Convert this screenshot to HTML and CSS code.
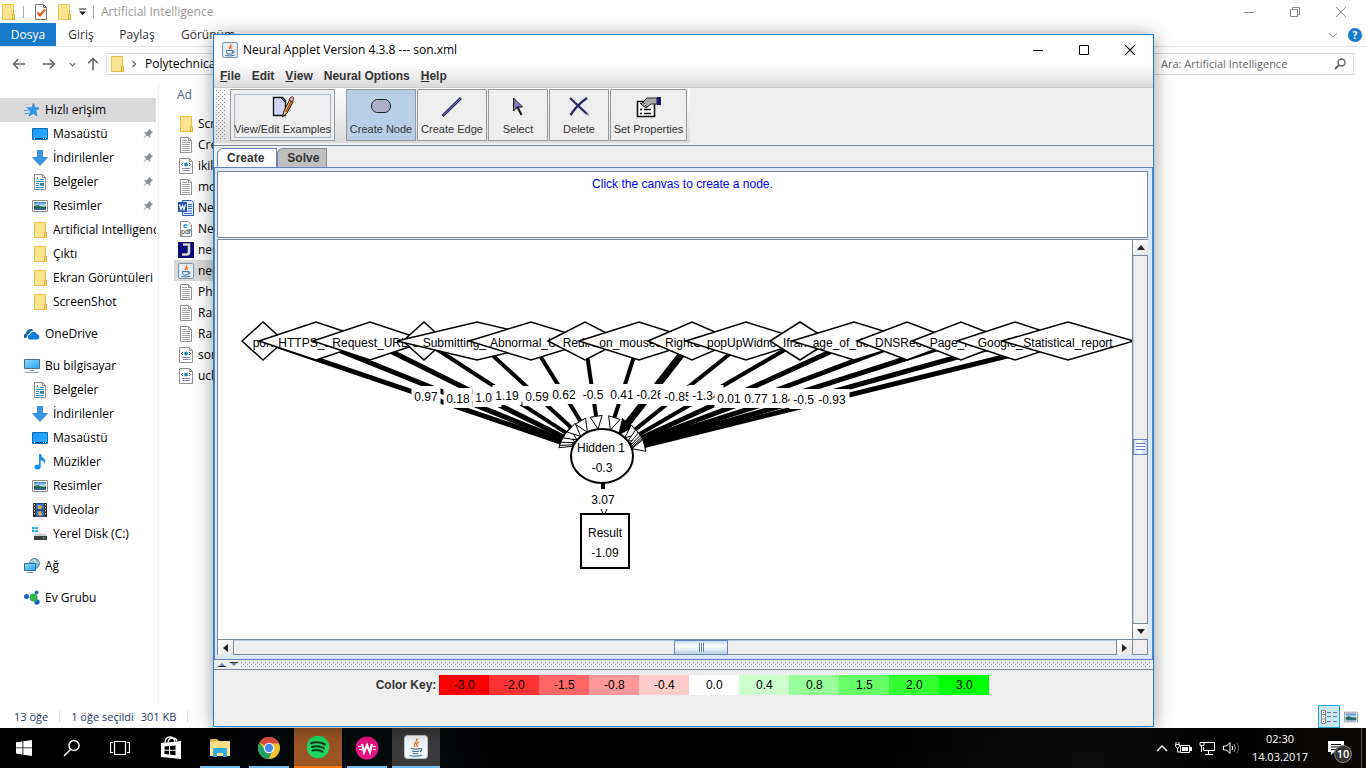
FILE: index.html
```html
<!DOCTYPE html>
<html lang="tr">
<head>
<meta charset="utf-8">
<title>Neural Applet Version 4.3.8 --- son.xml</title>
<link rel="stylesheet" href="styles.css">
</head>
<body>
<svg class="defs" aria-hidden="true">
  <defs>
    <linearGradient id="g-desk" x1="0" y1="0" x2="1" y2="1"><stop offset="0" stop-color="#1e90ee"/><stop offset="1" stop-color="#25b4ff"/></linearGradient>
    <linearGradient id="g-pc" x1="0" y1="0" x2="1" y2="1"><stop offset="0" stop-color="#8bdcff"/><stop offset="1" stop-color="#2aa5f0"/></linearGradient>
    <linearGradient id="g-photo" x1="0" y1="0" x2="0" y2="1"><stop offset="0" stop-color="#3f7fd0"/><stop offset=".5" stop-color="#d5ecf5"/><stop offset=".6" stop-color="#3e7d72"/><stop offset="1" stop-color="#2b5fa6"/></linearGradient>
    <symbol id="i-folder" viewBox="0 0 16 16"><path d="M2.5.5h11v10h1v5h-12z" fill="#ffe38f" stroke="#e8c04a"/><path d="M12.500 15v-4.500h2v5h-2z" fill="#ffd75e" stroke="#e0b23a"/></symbol>
    <symbol id="i-star" viewBox="0 0 16 16"><path d="M9.500 1.500l1.300 4.300 4.200.2-3.300 2.800 1.300 5-3.800-2.600-4 2.800 1.500-4.800-2.900-3 4-.4z" fill="#2f9be8" stroke="#1673bd" stroke-width=".7"/><path d="M0 8.500h5M1 11.500h4M2 5.500h4" stroke="#4aa9ec"/></symbol>
    <symbol id="i-desk" viewBox="0 0 16 16"><path d="M.5 2.500h15v11H.5z" fill="url(#g-desk)" stroke="#0c6cbd"/><path d="M1 12.500h14" stroke="#0a4d8c"/><path d="M2 12.500h1m8 0h1m1 0h1" stroke="#fff"/></symbol>
    <symbol id="i-down" viewBox="0 0 16 16"><path d="M5.500.5h5v7h5L8 15.500.5 7.500h5z" fill="#3b97e6" stroke="#2a7cc9" stroke-width=".8"/></symbol>
    <symbol id="i-doc" viewBox="0 0 16 16"><path d="M2.500.5h8l3 3v12h-11z" fill="#fff" stroke="#8a8a8a"/><path d="M10.500.5v3h3" fill="none" stroke="#8a8a8a"/><path d="M4.500 5.500l1-2 1 2M8 5.500h4M4 7.500h8M4 9.500h3M4 11.500h3M4 13.500h8" fill="none" stroke="#2b8acb"/><path d="M8 9h4v3H8z" fill="#3f8e84"/></symbol>
    <symbol id="i-pic" viewBox="0 0 16 16"><path d="M.5 2.500h15v11H.5z" fill="#fff" stroke="#8f8f8f"/><path d="M2 4h12v8H2z" fill="url(#g-photo)"/><path d="M2 8l4-1 4 2h4v1.500H2z" fill="#2d6a5e"/></symbol>
    <symbol id="i-text" viewBox="0 0 16 16"><path d="M2.500.5h8l3 3v12h-11z" fill="#fff" stroke="#919191"/><path d="M10.500.5v3h3" fill="none" stroke="#919191"/><path d="M4 3.500h5M4 5.500h8M4 7.500h8M4 9.500h8M4 11.500h8M4 13.500h8" stroke="#a5a5a5"/></symbol>
    <symbol id="i-xml" viewBox="0 0 16 16"><path d="M1.500.5h10l3 3v12h-13z" fill="#fff" stroke="#919191"/><path d="M11.500.5v3h3" fill="none" stroke="#919191"/><circle cx="8" cy="6.500" r="2" fill="#2c86a8"/><path d="M5 5L3.500 6.500 5 8m6-3l1.500 1.500L11 8" fill="none" stroke="#335a77"/><path d="M4 10.500h8M5 12.500h7" stroke="#8d90ae"/></symbol>
    <symbol id="i-word" viewBox="0 0 16 16"><path d="M4.500.5h9l2 2v13h-11z" fill="#dbe8f8" stroke="#2a5fb0"/><path d="M10 4.500h4M10 6.500h4M10 8.500h4M6 13.500h8M10 11h4" stroke="#3c74c4"/><path d="M0 2h9v10H0z" fill="#2153a8"/><path d="M1.500 4.500L3 9.500l1.500-4 1.500 4 1.500-5" fill="none" stroke="#fff" stroke-width="1.200"/></symbol>
    <symbol id="i-pdf" viewBox="0 0 16 16"><path d="M2.500.5h8l3 3v12h-11z" fill="#fff" stroke="#919191"/><text x="5" y="7" class="glyph-e">e</text><text x="3" y="13" class="glyph-pdf">pdf</text></symbol>
    <symbol id="i-j" viewBox="0 0 16 16"><path d="M0 0h16v16H0z" fill="#0a0a7a"/><path d="M5 2.500h6v7.500q0 2.500-2.500 2.500H4" fill="none" stroke="#d8d8c8" stroke-width="2.600"/></symbol>
    <symbol id="i-java" viewBox="0 0 16 16"><rect x=".5" y=".5" width="15" height="15" rx="1.500" fill="#e6eef5" stroke="#7e93a6"/><path d="M8.500 2c2 2-3 2.800-.8 5.300M10 4.200c-1.800 1-1.500 1.600-.5 2.800" fill="none" stroke="#e8731c" stroke-width="1.200"/><path d="M4.500 8.500h6q0 3-1 3.500h-4q-1-.6-1-3.500zm6 .5q2.500-.3 1.500 1.500l-2 .7M3.500 13.500q4.500 1 9-.3" fill="none" stroke="#4a7899"/></symbol>
    <symbol id="i-java-big" viewBox="0 0 24 24"><rect x=".5" y=".5" width="23" height="23" rx="3" fill="#f4f6f8" stroke="#b9c4ce"/><path d="M12.500 3.500c2.500 3-4.500 4.300-1.500 8.500M15 7c-3 1.500-3 2.500-1.300 5" fill="none" stroke="#e8731c" stroke-width="1.300"/><path d="M7 13.500q4.500 1 9 0M8 16q4 1 7 0M8.500 18.300q3 .8 6 0M5.500 20.500q6.500 1.500 12.500-.5M16.500 13.500q3 .5-.5 3.500" fill="none" stroke="#4a7899" stroke-width="1.100"/></symbol>
    <symbol id="i-cloud" viewBox="0 0 16 16"><path d="M1.500 12.500a2.600 2.600 0 0 1 .5-5A4.500 4.500 0 0 1 9.500 4.200q-3.500.5-4.300 3.600-2.200.5-2.200 3z" fill="#0b63b5"/><path d="M5.500 13.500a2.600 2.600 0 0 1 .3-5 3.700 3.700 0 0 1 7-.6 2.900 2.900 0 0 1 .7 5.600z" fill="#0f7cdb"/></symbol>
    <symbol id="i-pc" viewBox="0 0 16 16"><path d="M.5 1.500h15v9H.5z" fill="url(#g-pc)" stroke="#4a7187"/><path d="M6 12.500h4M1 14.500h14" stroke="#87a0b0"/></symbol>
    <symbol id="i-note" viewBox="0 0 16 16"><ellipse cx="5.500" cy="13" rx="3" ry="2.500" fill="#1590ea"/><path d="M7 0h2q.5 3 3.500 5 1.500 2-.5 5 .5-3-3.300-4v7H7z" fill="#1590ea"/></symbol>
    <symbol id="i-video" viewBox="0 0 16 16"><path d="M1 1h14v14H1z" fill="#2c2c2c"/><path d="M4 1.500h8v6H4zM4 8.500h8v6H4z" fill="#3b6fd1"/><path d="M6 3l4 1-1 3H6zM6 10l3-1 1 4-3 1z" fill="#e0b32c"/><path d="M2.500 2v12M13.500 2v12" stroke="#eee" stroke-dasharray="1.500 1.500"/></symbol>
    <symbol id="i-disk" viewBox="0 0 16 16"><path d="M0 1h2.500v2.300H0zm3.300 0h2.500v2.300H3.300zM0 4h2.500v2.300H0zm3.300 0h2.500v2.300H3.300z" fill="#1aa7ee"/><path d="M4 7.500h9l2 3H2z" fill="#c9cdd0"/><path d="M2 10h13v4H2z" fill="#3a3d40"/><path d="M11 12h2" stroke="#4de04d"/></symbol>
    <symbol id="i-net" viewBox="0 0 16 16"><circle cx="10.500" cy="5.500" r="5" fill="#86b6d4" stroke="#4d86a8"/><path d="M6 4q5-3 8 1M10 1q3 5 0 9" fill="none" stroke="#d4ecf7"/><path d="M.5 5.500h11v7H.5z" fill="url(#g-pc)" stroke="#2d6f96"/><path d="M3 14.500h6" stroke="#7d95a5"/></symbol>
    <symbol id="i-home" viewBox="0 0 16 16"><circle cx="2.500" cy="6.500" r="2.500" fill="#1769b5"/><circle cx="12.500" cy="2.500" r="2" fill="#1769b5"/><circle cx="13" cy="12" r="2.700" fill="#1769b5"/><circle cx="9.500" cy="7.500" r="4" fill="#36b34a"/></symbol>
    <symbol id="i-pin" viewBox="0 0 12 12"><path d="M7 1l4 3.500-1.500.5-1.500 2.500.3 2.500L5 7.500 1 11l3-4.500L2 4l2.500.3 2-1.800z" fill="#87919a"/></symbol>
    <symbol id="i-arrow" viewBox="0 0 16 16"><path d="M15 8H2m5-5.500L1.800 8 7 13.500" fill="none" stroke="currentColor" stroke-width="1.800"/></symbol>
    <symbol id="i-chev" viewBox="0 0 8 8"><path d="M2.500 1l3 3-3 3" fill="none" stroke="currentColor" stroke-width="1.400"/></symbol>
  </defs>
</svg>

<div class="desktop">
  <section class="explorer" aria-label="Artificial Intelligence">
    <header class="ex-title">
      <svg class="ic"><use href="#i-folder"/></svg>
      <span class="bar"></span>
      <button class="plain check" aria-label="Özellikler"><svg class="ic" viewBox="0 0 16 16"><path d="M2.500.5h8l3 3v12h-11z" fill="#fff" stroke="#777"/><path d="M10.500.5v3h3" fill="none" stroke="#777"/><path d="M4.500 8.500l2.500 3 5-6" fill="none" stroke="#e8511b" stroke-width="2"/></svg></button>
      <button class="plain" aria-label="Yeni klasör"><svg class="ic"><use href="#i-folder"/></svg></button>
      <button class="plain more" aria-label="Özelleştir"><svg width="7" height="8" viewBox="0 0 7 8"><path d="M0 1h7" stroke="#222"/><path d="M0 3.500h7L3.500 7z" fill="#222"/></svg></button>
      <span class="bar"></span>
      <h1 class="ex-name">Artificial Intelligence</h1>
      <div class="win-buttons">
        <button class="plain" aria-label="Simge durumuna küçült"><svg width="10" height="10"><path d="M0 5.500h10" stroke="#888"/></svg></button>
        <button class="plain" aria-label="Önceki boyut"><svg width="10" height="10"><path d="M.5 2.500h7v7h-7zM2.500 2V.5h7v7H8" fill="none" stroke="#888"/></svg></button>
        <button class="plain" aria-label="Kapat"><svg width="10" height="10"><path d="M0 0l10 10M10 0L0 10" stroke="#888"/></svg></button>
      </div>
    </header>
    <nav class="ribbon">
      <button class="rtab file">Dosya</button>
      <button class="rtab giris">Giriş</button>
      <button class="rtab paylas">Paylaş</button>
      <button class="rtab gorunum">Görünüm</button>
      <span class="ribbon-end"><svg width="10" height="6"><path d="M1 1l4 4 4-4" fill="none" stroke="#999"/></svg><button class="help">?</button></span>
    </nav>
    <div class="address-row">
      <button class="plain" aria-label="Geri"><svg width="14" height="14"><use href="#i-arrow"/></svg></button>
      <button class="plain fwd" aria-label="İleri"><svg width="14" height="14"><use href="#i-arrow"/></svg></button>
      <button class="plain recent" aria-label="Son konumlar"><svg width="7" height="7"><use href="#i-chev"/></svg></button>
      <button class="plain up" aria-label="Yukarı"><svg width="14" height="14"><use href="#i-arrow"/></svg></button>
      <div class="address"><svg class="ic"><use href="#i-folder"/></svg><svg class="crumb" width="8" height="8"><use href="#i-chev"/></svg><a href="#p">Polytechnica</a></div>
      <label class="search"><input type="text" aria-label="Ara" placeholder="Ara: Artificial Intelligence"><svg width="12" height="12"><circle cx="7.500" cy="4.500" r="3.500" fill="none" stroke="#666" stroke-width="1.400"/><path d="M5 7L1 11" stroke="#666" stroke-width="2"/></svg></label>
    </div>
    <div class="ex-body">
      <nav class="sidebar">
        <ul>
          <li><a class="root current" href="#a"><svg class="ic"><use href="#i-star"/></svg>Hızlı erişim</a></li>
          <li><a href="#a"><svg class="ic"><use href="#i-desk"/></svg>Masaüstü<svg class="pin"><use href="#i-pin"/></svg></a></li>
          <li><a href="#a"><svg class="ic"><use href="#i-down"/></svg>İndirilenler<svg class="pin"><use href="#i-pin"/></svg></a></li>
          <li><a href="#a"><svg class="ic"><use href="#i-doc"/></svg>Belgeler<svg class="pin"><use href="#i-pin"/></svg></a></li>
          <li><a href="#a"><svg class="ic"><use href="#i-pic"/></svg>Resimler<svg class="pin"><use href="#i-pin"/></svg></a></li>
          <li><a href="#a"><svg class="ic"><use href="#i-folder"/></svg>Artificial Intelligence</a></li>
          <li><a href="#a"><svg class="ic"><use href="#i-folder"/></svg>Çıktı</a></li>
          <li><a href="#a"><svg class="ic"><use href="#i-folder"/></svg>Ekran Görüntüleri</a></li>
          <li><a href="#a"><svg class="ic"><use href="#i-folder"/></svg>ScreenShot</a></li>
        </ul>
        <ul><li><a class="root" href="#a"><svg class="ic"><use href="#i-cloud"/></svg>OneDrive</a></li></ul>
        <ul>
          <li><a class="root" href="#a"><svg class="ic"><use href="#i-pc"/></svg>Bu bilgisayar</a></li>
          <li><a href="#a"><svg class="ic"><use href="#i-doc"/></svg>Belgeler</a></li>
          <li><a href="#a"><svg class="ic"><use href="#i-down"/></svg>İndirilenler</a></li>
          <li><a href="#a"><svg class="ic"><use href="#i-desk"/></svg>Masaüstü</a></li>
          <li><a href="#a"><svg class="ic"><use href="#i-note"/></svg>Müzikler</a></li>
          <li><a href="#a"><svg class="ic"><use href="#i-pic"/></svg>Resimler</a></li>
          <li><a href="#a"><svg class="ic"><use href="#i-video"/></svg>Videolar</a></li>
          <li><a href="#a"><svg class="ic"><use href="#i-disk"/></svg>Yerel Disk (C:)</a></li>
        </ul>
        <ul><li><a class="root" href="#a"><svg class="ic"><use href="#i-net"/></svg>Ağ</a></li></ul>
        <ul><li><a class="root" href="#a"><svg class="ic"><use href="#i-home"/></svg>Ev Grubu</a></li></ul>
      </nav>
      <div class="files">
        <button class="plain col-head">Ad</button>
        <ul>
          <li><svg class="ic"><use href="#i-folder"/></svg>ScreenShot</li>
          <li><svg class="ic"><use href="#i-text"/></svg>Credits</li>
          <li><svg class="ic"><use href="#i-xml"/></svg>ikili</li>
          <li><svg class="ic"><use href="#i-text"/></svg>model</li>
          <li><svg class="ic"><use href="#i-word"/></svg>Neural</li>
          <li><svg class="ic"><use href="#i-pdf"/></svg>Neural</li>
          <li><svg class="ic"><use href="#i-j"/></svg>neural</li>
          <li class="selected"><svg class="ic"><use href="#i-java"/></svg>neural</li>
          <li><svg class="ic"><use href="#i-text"/></svg>Phishing</li>
          <li><svg class="ic"><use href="#i-text"/></svg>Random</li>
          <li><svg class="ic"><use href="#i-text"/></svg>Random</li>
          <li><svg class="ic"><use href="#i-xml"/></svg>son</li>
          <li><svg class="ic"><use href="#i-xml"/></svg>uclu</li>
        </ul>
      </div>
    </div>
    <footer class="ex-status">
      <span>13 öğe</span><i></i><span>1 öğe seçildi</span><span class="size">301 KB</span><i></i>
      <div class="views">
        <button class="plain view on" aria-label="Ayrıntılar"><svg width="16" height="14"><path d="M.5.5h4v13h-4zM.5 4.500h4M.5 9h4" fill="#fff" stroke="#888"/><path d="M2 2.500h1" stroke="#38c"/><path d="M2 6.500h1" stroke="#38c"/><path d="M2 11.500h1" stroke="#d33"/><path d="M6 2.500h4m2 0h4M6 6.500h4m2 0h4M6 11.500h4m2 0h4" stroke="#777"/></svg></button>
        <button class="plain view" aria-label="Büyük simgeler"><svg width="14" height="14"><use href="#i-pic"/></svg></button>
      </div>
    </footer>
  </section>

  <section class="applet" aria-label="Neural Applet">
    <header class="ap-title">
      <svg class="ic"><use href="#i-java"/></svg>
      <h2>Neural Applet Version 4.3.8 --- son.xml</h2>
      <div class="win-buttons dark">
        <button class="plain" aria-label="Minimize"><svg width="10" height="10"><path d="M0 5.500h10" stroke="#000"/></svg></button>
        <button class="plain" aria-label="Maximize"><svg width="10" height="10"><path d="M.5.5h9v9h-9z" fill="none" stroke="#000"/></svg></button>
        <button class="plain" aria-label="Close"><svg width="10" height="10"><path d="M0 0l10 10M10 0L0 10" stroke="#000" stroke-width="1.200"/></svg></button>
      </div>
    </header>
    <nav class="menubar">
      <button class="plain"><u>F</u>ile</button><button class="plain">Edit</button><button class="plain"><u>V</u>iew</button><button class="plain">Neural Options</button><button class="plain"><u>H</u>elp</button>
    </nav>
    <div class="toolbar-row">
      <div class="toolbar">
        <span class="grip"></span>
        <button class="tool examples"><span class="focus"><svg width="22" height="24" viewBox="0 0 22 24"><path d="M1.500 2.500h9l3 3v15h-12z" fill="#d4d4f6" stroke="#111" stroke-width="1.300"/><path d="M9 3l4 4" stroke="#111"/><path d="M17.500 5L12 16l-1.500 6L15 18l6-11z" fill="#f0d548" stroke="#111"/><path d="M14 17l5.500-11" stroke="#b33" stroke-width="1.500"/><path d="M17 5q2-5 4.500-2.500.5 2-1 4.500z" fill="#d8a0a0" stroke="#533"/></svg>View/Edit Examples</span></button>
        <button class="tool node on"><svg width="22" height="24" viewBox="0 0 22 24"><path d="M6.500 4.500h9q5 1.500 5 6.500t-5 6.500h-9q-5-1.500-5-6.500t5-6.500z" fill="#aeaec8" stroke="#222"/></svg>Create Node</button>
        <button class="tool edge"><svg width="22" height="24" viewBox="0 0 22 24"><path d="M1.500 21L20 3" stroke="#23235c" stroke-width="3"/><path d="M2 20.500L19.500 3.500" stroke="#8585c8"/></svg>Create Edge</button>
        <button class="tool select"><svg width="22" height="24" viewBox="0 0 22 24"><path d="M6.500 3v13l3-3z" fill="#8282c4" stroke="#111"/><path d="M6.500 3l9 9h-4.500l-2 1" fill="#8282c4" stroke="#111"/><path d="M10.500 12l4 8" stroke="#111" stroke-width="2"/></svg>Select</button>
        <button class="tool delete"><svg width="22" height="24" viewBox="0 0 22 24"><path d="M2 3l17 16M19 3Q9 10 2.500 20" fill="none" stroke="#2b2b64" stroke-width="2.400"/><path d="M20 18.500v2" stroke="#2b2b64"/></svg>Delete</button>
        <button class="tool props"><svg width="26" height="24" viewBox="0 0 26 24"><path d="M1.500 6.500h17v15h-17z" fill="#fff" stroke="#111" stroke-width="1.600"/><path d="M4 14.500h2m2 0h7M4 18.500h2m2 0h7" stroke="#111" stroke-width="1.500"/><path d="M5 9l6-6h10v6h-6l-5 4z" fill="#aaa" stroke="#222"/><path d="M21 2h4v8h-4z" fill="#15157a"/><path d="M4 8l2 2M7 7l2 2M9 10l2 2" stroke="#333"/></svg>Set Properties</button>
      </div>
    </div>
    <div class="tabs" role="tablist">
      <button class="tab active" role="tab" aria-selected="true">Create</button><button class="tab" role="tab" aria-selected="false">Solve</button>
    </div>
    <div class="panel">
      <textarea class="message" readonly aria-label="Message">Click the canvas to create a node.</textarea>
      <div class="canvas-frame">
        <svg class="canvas" id="network" role="img" aria-label="Neural network"></svg>
        <div class="vbar">
          <button class="plain arrow" aria-label="Scroll up"><svg width="8" height="5"><path d="M0 5L4 0l4 5z" fill="#222"/></svg></button>
          <div class="track"><span class="thumb"></span></div>
          <button class="plain arrow" aria-label="Scroll down"><svg width="8" height="5"><path d="M0 0l4 5 4-5z" fill="#222"/></svg></button>
        </div>
        <div class="hbar">
          <button class="plain arrow" aria-label="Scroll left"><svg width="5" height="8"><path d="M5 0L0 4l5 4z" fill="#222"/></svg></button>
          <div class="track"><span class="thumb"></span></div>
          <button class="plain arrow" aria-label="Scroll right"><svg width="5" height="8"><path d="M0 0l5 4-5 4z" fill="#222"/></svg></button>
        </div>
        <span class="corner"></span>
      </div>
    </div>
    <div class="divider"><svg width="20" height="5"><path d="M0 5l4-4 4 4zM12 0h8l-4 4z" fill="#6382bf"/><path d="M0 4.500h8M12 .5h8" stroke="#333"/></svg><span class="dots"></span></div>
    <div class="key">
      <b>Color Key:</b>
      <ol>
        <li class="n5">-3.0</li><li class="n4">-2.0</li><li class="n3">-1.5</li><li class="n2">-0.8</li><li class="n1">-0.4</li><li class="z">0.0</li><li class="p1">0.4</li><li class="p2">0.8</li><li class="p3">1.5</li><li class="p4">2.0</li><li class="p5">3.0</li>
      </ol>
    </div>
  </section>

  <footer class="taskbar">
    <button class="task" aria-label="Başlat"><svg width="16" height="16"><path d="M0 2.300l6.500-.9v6.100H0zM7.300 1.300L16 0v7.500H7.300zM0 8.300h6.500v6.200L0 13.600zM7.300 8.300H16V16l-8.700-1.300z" fill="#fff"/></svg></button>
    <button class="task" aria-label="Ara"><svg width="18" height="18"><circle cx="11" cy="6.500" r="5" fill="none" stroke="#fff" stroke-width="1.500"/><path d="M7.500 10.500L1 17" stroke="#fff" stroke-width="1.500"/></svg></button>
    <button class="task" aria-label="Görev Görünümü"><svg width="20" height="16"><path d="M4.500 1.500h11v13h-11zM3 2.500H.5v10H3M17 2.500h2.500v10H17" fill="none" stroke="#fff" stroke-width="1.200"/></svg></button>
    <div class="apps">
      <button class="task" aria-label="Mağaza"><svg width="22" height="24" viewBox="0 0 22 24"><path d="M1 7l20-2v18L1 21z" fill="#fff"/><path d="M5 7Q5 1 10 1q4 0 5 5M8 6q1-4 5-4 3 0 4 3" fill="none" stroke="#fff" stroke-width="1.300"/><path d="M4.500 10.500l4.500-.5v3.800H4.500zM10 10l5.500-.6v4.400H10zM4.500 14.800H9v3.700l-4.500-.5zM10 14.800h5.500v4.400l-5.500-.6z" fill="#000"/></svg></button>
      <button class="task open" aria-label="Dosya Gezgini"><svg width="22" height="20" viewBox="0 0 22 20"><path d="M1 1h7l2 2h11v15H1z" fill="#ffe28a"/><path d="M1 1h7l1 2-8 1z" fill="#e3b544"/><path d="M4 10h14v9h-4v-4H8v4H4z" fill="#36a9e1"/></svg></button>
      <button class="task open" aria-label="Chrome"><svg width="24" height="24" viewBox="0 0 24 24"><circle cx="12" cy="12" r="11" fill="#f4c430"/><path d="M12 12L2.500 6.500A11 11 0 0 1 22 7.500H12z" fill="#dd4b3e"/><path d="M2.500 6.500A11 11 0 0 0 11.500 23l4.500-9-4 3-4-3z" fill="#1da362"/><circle cx="12" cy="12" r="5.200" fill="#fff"/><circle cx="12" cy="12" r="4.200" fill="#4a8af4"/></svg></button>
      <button class="task spotify" aria-label="Spotify"><svg width="24" height="24" viewBox="0 0 24 24"><circle cx="12" cy="12" r="11.300" fill="#1ed760"/><path d="M5 8.200q7.500-2.200 14 1.300M5.800 12q6.500-1.800 12 1.200M6.500 15.500q5.500-1.300 10 1.200" fill="none" stroke="#14371f" stroke-width="2" stroke-linecap="round"/></svg></button>
      <button class="task open" aria-label="W"><svg width="24" height="24" viewBox="0 0 24 24"><circle cx="12" cy="12" r="11.500" fill="#e3127e"/><path d="M3 10.500h3m12 3h3M18 10.500h3M4 13.500h3" stroke="#fff"/><path d="M7 8l2 8 3-7 3 7 2-8" fill="none" stroke="#fff" stroke-width="2.200"/></svg></button>
      <button class="task running" aria-label="Neural Applet"><svg width="24" height="24"><use href="#i-java-big"/></svg></button>
    </div>
    <div class="tray">
      <svg width="12" height="8"><path d="M1 7l5-5 5 5" fill="none" stroke="#fff" stroke-width="1.400"/></svg>
      <svg width="17" height="14"><path d="M5.500 4.500h9v7h-9z" fill="none" stroke="#fff"/><path d="M7 6h6v4H7zM15 6h2v4h-2z" fill="#fff"/><path d="M1 1v2m3-2v2M.5 3.500h4v2l-2 1.500-2-1.500zM2.500 7v4H5" fill="none" stroke="#fff"/></svg>
      <svg width="17" height="14"><path d="M4 1.500h11.500v8h-11V6M9.500 10v3M6 13.500h8M1 1.500h4v3H1zM2.500 5v6" fill="none" stroke="#fff"/></svg>
      <svg width="17" height="14"><path d="M.5 5h3L7 1.500v11L3.500 9h-3z" fill="none" stroke="#fff"/><path d="M9 5q1.500 2 0 4" fill="none" stroke="#fff"/><path d="M11 3q3 4 0 8" fill="none" stroke="#aaa"/><path d="M13.500 1.500q4 5.500 0 11" fill="none" stroke="#666"/></svg>
      <div class="clock"><time>02:30</time><span>14.03.2017</span></div>
      <button class="plain notify" aria-label="Bildirimler"><svg width="18" height="17"><path d="M1 1h16v11H7l-3 3v-3H1z" fill="#fff"/><path d="M4 4.500h10M4 7h10M4 9.500h7" stroke="#000"/></svg><span class="count">10</span></button>
    </div>
  </footer>
</div>
<script src="app.js"></script>
</body>
</html>
```
FILE: styles.css
```css
* { box-sizing: border-box; }
html, body { height: 100%; margin: 0; }
body { font: 12px/16px "Open Sans", "Noto Sans", sans-serif; color: #000; background: #000; overflow: hidden; }
h1, h2 { margin: 0; font: inherit; }
ul, ol { list-style: none; margin: 0; padding: 0; }
a { color: inherit; text-decoration: none; }
button { font: inherit; color: inherit; margin: 0; }
svg { display: block; flex: none; }
.defs { position: absolute; width: 0; height: 0; }
.plain { border: 0; padding: 0; background: none; display: flex; align-items: center; justify-content: center; }
.ic { width: 16px; height: 16px; }
.glyph-e { font: bold 8px "Liberation Sans", sans-serif; fill: #0a84d0; }
.glyph-pdf { font: 7px "Liberation Sans", sans-serif; fill: #222; }

.desktop { position: relative; display: flex; flex-direction: column; height: 100vh; }

/* File explorer */
.explorer { flex: 1; min-height: 0; display: flex; flex-direction: column; background: #fff; }
.ex-title { display: flex; align-items: center; height: 23px; gap: 7px; color: #999; }
.ex-title .bar { width: 1px; height: 12px; background: #aaa; }
.ex-title .check { margin: 0 0 0 2px; }
.win-buttons { display: flex; margin-left: auto; align-self: stretch; }
.win-buttons .plain { width: 46px; padding-right: 4px; }
.ribbon { display: flex; align-items: stretch; height: 24px; border-bottom: 1px solid #e4e4e4; }
.rtab { border: 0; background: none; padding: 0; color: #333; text-align: center; }
.rtab.file { width: 56px; background: #1979ca; color: #fff; }
.rtab.giris { width: 50px; }
.rtab.paylas { width: 62px; }
.rtab.gorunum { width: 80px; }
.ribbon-end { margin-left: auto; display: flex; align-items: center; gap: 10px; padding-right: 4px; }
.help { width: 14px; height: 14px; border: 0; border-radius: 50%; padding: 0; background: #1979ca; color: #fff; font: bold 10px/14px "Open Sans", sans-serif; }
.address-row { display: flex; align-items: center; height: 34px; padding: 0 12px; color: #666; }
.fwd { margin-left: 16px; transform: rotate(180deg); }
.recent { margin-left: 13px; transform: rotate(90deg); }
.up { margin: 0 6px 0 10px; transform: rotate(90deg); }
.address { flex: 1; min-width: 0; display: flex; align-items: center; height: 22px; border: 1px solid #d9d9d9; padding-left: 2px; color: #000; }
.crumb { margin: 0 7px 0 5px; color: #666; }
.search { display: flex; align-items: center; width: 201px; height: 22px; border: 1px solid #d9d9d9; padding: 0 7px; }
.search input { flex: 1; min-width: 0; border: 0; padding: 0; outline: 0; font: inherit; font-size: 11px; background: none; }
.search input::placeholder { color: #666; opacity: 1; }
.ex-body { flex: 1; min-height: 0; display: flex; padding-top: 2px; }
.sidebar { width: 159px; padding: 15px 2px 0 0; border-right: 1px solid #f0f0f0; overflow: hidden; }
.sidebar ul + ul { margin-top: 8px; }
.sidebar a { display: flex; align-items: center; gap: 5px; height: 24px; padding-left: 32px; white-space: nowrap; overflow: hidden; }
.sidebar a.root { padding-left: 24px; }
.sidebar a.current { background: #d9d9d9; }
.pin { width: 12px; height: 12px; margin: 0 2px 0 auto; }
.files { width: 600px; padding: 2px 0 0 15px; }
.col-head { height: 20px; padding-left: 3px; color: #4c607a; }
.files ul { padding-top: 8px; }
.files li { display: flex; align-items: center; gap: 4px; height: 21px; padding-left: 4px; }
.files .selected { background: #d9d9d9; }
.ex-status { display: flex; align-items: center; height: 23px; padding: 0 8px 0 14px; color: #1e395b; font-size: 11px; }
.ex-status i { width: 1px; height: 12px; margin: 0 11px; background: #ddd; }
.ex-status .size { margin-left: 7px; }
.views { display: flex; margin-left: auto; gap: 4px; align-items: center; }
.view.on { width: 22px; height: 23px; border: 1px solid #26a0da; background: #cbe8f6; }

/* Applet window */
.applet { position: absolute; top: 34px; right: 212px; bottom: 41px; left: 213px; display: flex; flex-direction: column; border: 1px solid #1883d7; background: #eee; box-shadow: 0 2px 18px rgba(0, 0, 0, .4); font: 12px/16px "Liberation Sans", Arial, sans-serif; color: #333; }
.ap-title { display: flex; align-items: center; gap: 5px; height: 30px; padding-left: 8px; background: #fff; color: #000; font: 12px/16px "Open Sans", sans-serif; }
.win-buttons.dark .plain { padding: 0; }
.menubar { display: flex; align-items: center; gap: 11px; height: 23px; padding: 0 6px; background: linear-gradient(#fff, #dadada); border-bottom: 1px solid #ccc; font-weight: bold; }
.toolbar-row { display: flex; height: 58px; border-bottom: 1px solid #7a8a99; }
.toolbar { display: flex; gap: 1px; height: 55px; padding: 1px 3px 2px 2px; background: linear-gradient(#fff, #dadada); }
.grip { width: 10px; margin: 1px 3px 2px 0; background: conic-gradient(from 270deg at 1px 1px, #888 90deg, transparent 0) 0 0 / 4px 4px, conic-gradient(from 270deg at 1px 1px, #888 90deg, transparent 0) 2px 2px / 4px 4px; }
.tool { display: flex; flex-direction: column; align-items: center; gap: 4px; height: 52px; padding: 5px 0 0; border: 1px solid #999; background: #eee; font-size: 11px; line-height: 12px; white-space: nowrap; }
.tool.on { background: #b8cfe5; }
.tool.examples { width: 105px; margin-right: 10px; padding: 4px 0 0; }
.focus { display: flex; flex-direction: column; align-items: center; gap: 4px; width: 97px; height: 44px; border: 1px solid #a3b8cc; }
.tool.node, .tool.edge { width: 70px; }
.tool.select, .tool.delete { width: 60px; }
.tool.props { width: 77px; }
.tabs { display: flex; align-items: flex-end; height: 21px; padding-left: 3px; }
.tab { height: 19px; border: 1px solid #7a8a99; border-bottom: 0; border-top-left-radius: 6px; background: #bfbfbf; font-weight: bold; line-height: 18px; padding: 0 7px 0 9px; }
.tab.active { padding: 0 12px 0 9px; background: #fff; border-color: #6382bf; }
.panel { flex: 1; min-height: 0; display: flex; flex-direction: column; gap: 1px; padding: 3px 4px 4px 2px; border: 1px solid #6382bf; background: #dbe8f5; }
.message { display: block; width: 100%; height: 67px; padding: 4px 0; border: 1px solid #7a8a99; outline: 0; resize: none; background: #fff; color: #00f; font: inherit; text-align: center; }
.canvas-frame { flex: 1; min-height: 0; display: grid; grid-template: minmax(0, 1fr) 15px / minmax(0, 1fr) 15px; border: 1px solid #7a8a99; background: #eee; }
.canvas { width: 100%; height: 100%; background: #fff; overflow: hidden; font: 12px "Liberation Sans", Arial, sans-serif; }
.canvas text { text-anchor: middle; fill: #000; }
.canvas .shape { fill: #fff; stroke: #000; stroke-width: 2; }
.canvas .diamond { fill: #fff; stroke: #000; stroke-width: 1.5; }
.canvas .edge-line { stroke: #000; stroke-width: 4; }
.canvas .heavy { stroke-width: 5; }
.canvas .edge-line.strong { stroke-width: 7; }
.canvas .head { fill: #fff; stroke: #000; stroke-width: 1; }
.canvas .head.strong { fill: #000; stroke-width: 2; }
.canvas .tag { fill: #fff; }
.vbar, .hbar { display: flex; }
.vbar { flex-direction: column; border-left: 1px solid #7a8a99; }
.hbar { border-top: 1px solid #7a8a99; }
.arrow { width: 15px; height: 15px; background: linear-gradient(135deg, #fff, #e4e4e4); }
.track { flex: 1; display: flex; align-items: center; justify-content: center; border: 0 solid #7a8a99; }
.vbar .track { flex-direction: column; border-width: 1px 0; box-shadow: inset 1px 0 #b8cfe5; }
.hbar .track { border-width: 0 1px; box-shadow: inset 0 1px #b8cfe5; }
.thumb { display: block; border: 1px solid #6382bf; background: linear-gradient(#c8ddf2, #fff 40%, #b8cfe5); }
.vbar .thumb { width: 15px; height: 16px; margin-top: 14px; background: repeating-linear-gradient(#6382bf 0 1px, #fff 1px 3px) 50% 50% / 9px 7px no-repeat, linear-gradient(90deg, #c8ddf2, #fff 40%, #b8cfe5); }
.hbar .thumb { width: 54px; height: 15px; margin-left: 52px; background: repeating-linear-gradient(90deg, #6382bf 0 1px, #fff 1px 2px) 50% 50% / 5px 9px no-repeat, linear-gradient(#c8ddf2, #fff 40%, #b8cfe5); }
.corner { border: 0 solid #7a8a99; border-width: 1px 0 0 1px; }
.divider { display: flex; align-items: center; gap: 3px; height: 10px; padding: 0 3px 0 4px; border-bottom: 1px solid #7a8a99; }
.dots { flex: 1; height: 5px; background: conic-gradient(from 270deg at 1px 1px, #7a8a99 90deg, transparent 0) 0 0 / 4px 4px, conic-gradient(from 270deg at 1px 1px, #7a8a99 90deg, transparent 0) 2px 2px / 4px 4px; }
.key { display: flex; justify-content: center; align-items: flex-start; gap: 3px; height: 56px; padding: 5px 2px 0 0; line-height: 20px; }
.key ol { display: flex; color: #000; }
.key li { width: 50px; text-align: center; line-height: 21px; height: 20px; }
.n5 { background: #f00; } .n4 { background: #f33; } .n3 { background: #f66; } .n2 { background: #f99; } .n1 { background: #fcc; }
.z { background: #fff; }
.p1 { background: #cfc; } .p2 { background: #9f9; } .p3 { background: #6f6; } .p4 { background: #3f3; } .p5 { background: #0f0; }

/* Taskbar */
.taskbar { display: flex; height: 40px; color: #fff; background: linear-gradient(90deg, #000 15%, #02090b 22%, #020a0c 30%, #000 38%, #000 62%, #0b0b0b 80%, #000 90%, #0c0a08); }
.task { display: flex; align-items: center; justify-content: center; width: 48px; border: 0; padding: 0; background: none; }
.apps { display: flex; gap: 1px; padding-left: 3px; }
.task.open { background: linear-gradient(#76b9ed, #76b9ed) 50% 100% / 40px 2px no-repeat; }
.task.spotify { background: #9c5623; border-bottom: 2px solid #ff7300; }
.task.running { background: #3a3a3a; border-bottom: 2px solid #76b9ed; }
.tray { display: flex; align-items: center; gap: 7px; margin-left: auto; padding-right: 4px; }
.clock { display: flex; flex-direction: column; align-items: center; line-height: 18px; margin: 0 1px 0 5px; font-size: 11px; }
.notify { position: relative; width: 46px; height: 40px; border-right: 1px solid #555; padding-right: 6px; }
.count { position: absolute; left: 18px; top: 17px; width: 18px; height: 18px; border: 1px solid #888; border-radius: 50%; background: #333; font-size: 11px; font-weight: 600; line-height: 16px; text-align: center; }
```
FILE: app.js
```javascript
const NS = "http://www.w3.org/2000/svg";
const canvas = document.getElementById("network");

// Input nodes: name, centre x, half width, weight, weight label centre x, label baseline.
const inputs = [
  ["port", 45, 21, "0.97", 208, 161],
  ["HTTPS_token", 98, 57, "0.18", 240, 163],
  ["Request_URL", 152, 57, "1.03", 269, 162],
  ["SFH", 206, 21, "1.19", 289, 160],
  ["Submitting_to_email", 259, 80, "0.59", 319, 161],
  ["Abnormal_URL", 313, 62, "0.62", 346, 159],
  ["Redirect", 367, 37, "-0.5", 375, 159],
  ["on_mouseover", 421, 60, "0.41", 404, 159],
  ["RightClick", 474, 44, "-0.26", 432, 159],
  ["popUpWidnow", 528, 60, "-0.85", 460, 161],
  ["Iframe", 582, 30, "-1.34", 488, 160],
  ["age_of_domain", 636, 62, "0.01", 511, 163],
  ["DNSRecord", 689, 50, "0.77", 538, 163],
  ["Page_Rank", 743, 49, "1.84", 565, 163],
  ["Google_Index", 797, 58, "-0.53", 589, 164],
  ["Statistical_report", 850, 66, "-0.93", 614, 164]
];
const rowY = 101;
const hidden = { x: 384, y: 216, rx: 31, ry: 27 };

function add(tag, attrs, text) {
  const el = document.createElementNS(NS, tag);
  for (const name in attrs) el.setAttribute(name, attrs[name]);
  if (text) el.textContent = text;
  canvas.appendChild(el);
}

inputs.forEach(([name, x]) => {
  const dx = x - hidden.x, dy = rowY - hidden.y;
  const len = Math.hypot(dx, dy), ux = dx / len, uy = dy / len;
  const edge = 1 / Math.hypot(ux / hidden.rx, uy / hidden.ry);
  const bx = hidden.x + ux * (edge + 13), by = hidden.y + uy * (edge + 13);
  const tx = hidden.x + ux * edge, ty = hidden.y + uy * edge;
  const strong = name === "RightClick" ? " strong" : "";
  const heavy = Math.abs(dx) > 200 ? " heavy" : "";
  add("line", { class: "edge-line" + strong + heavy, x1: x, y1: rowY, x2: bx, y2: by });
  add("path", { class: "head" + strong, d: `M${tx} ${ty}L${bx - uy * 6} ${by + ux * 6}L${bx + uy * 6} ${by - ux * 6}Z` });
});

inputs.forEach(([, , , weight, x, y]) => {
  const w = weight.length * 6 + 5;
  add("rect", { class: "tag", x: x - w / 2, y: y - 15, width: w, height: 20 });
  add("text", { x, y }, weight);
});

inputs.forEach(([name, x, half]) => {
  add("path", { class: "diamond", d: `M${x - half} ${rowY}L${x} ${rowY - 19}L${x + half} ${rowY}L${x} ${rowY + 19}Z` });
  add("text", { x, y: 107 }, name);
});

add("line", { class: "edge-line", x1: 385, y1: 240, x2: 385, y2: 249 });
add("ellipse", { class: "shape", cx: hidden.x, cy: hidden.y, rx: hidden.rx, ry: hidden.ry });
add("text", { x: 383, y: 212 }, "Hidden 1");
add("text", { x: 384, y: 232 }, "-0.3");
add("text", { x: 385, y: 264 }, "3.07");
add("path", { class: "head", d: "M383 269L386 276L389 269" });
add("rect", { class: "shape", x: 363, y: 274, width: 48, height: 54 });
add("text", { x: 387, y: 297 }, "Result");
add("text", { x: 387, y: 317 }, "-1.09");
```
